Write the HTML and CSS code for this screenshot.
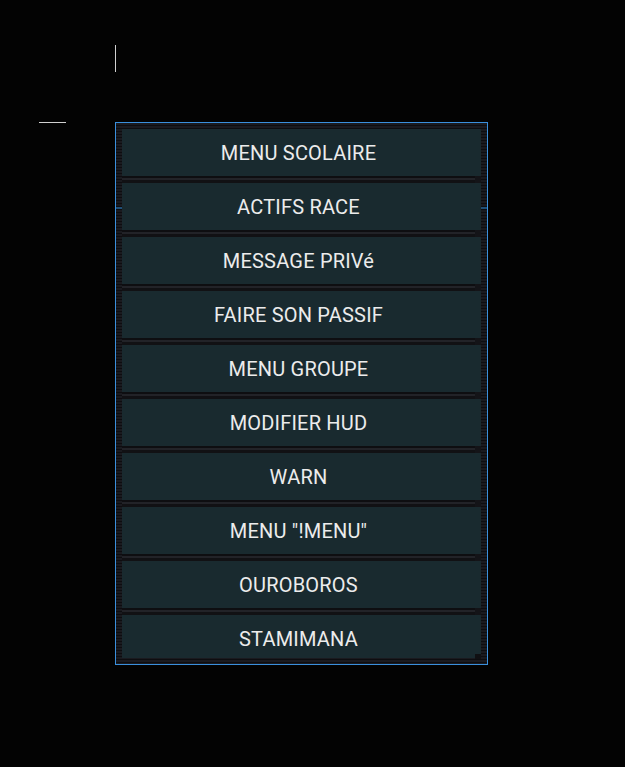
FILE: index.html
```html
<!DOCTYPE html>
<html lang="fr">
<head>
<meta charset="utf-8">
<title>Menu</title>
<link rel="stylesheet" href="styles.css">
</head>
<body>
<div class="stage">
  <div class="caret-v"></div>
  <div class="caret-h"></div>
  <div class="frame">
    <div class="scroll-mark left"></div>
    <div class="scroll-mark right"></div>
    <div class="list">
      <div class="item"><button class="btn">MENU SCOLAIRE</button><div class="band"></div></div>
      <div class="item"><button class="btn">ACTIFS RACE</button><div class="band"></div></div>
      <div class="item"><button class="btn">MESSAGE PRIVé</button><div class="band"></div></div>
      <div class="item"><button class="btn">FAIRE SON PASSIF</button><div class="band"></div></div>
      <div class="item"><button class="btn">MENU GROUPE</button><div class="band"></div></div>
      <div class="item"><button class="btn">MODIFIER HUD</button><div class="band"></div></div>
      <div class="item"><button class="btn">WARN</button><div class="band"></div></div>
      <div class="item"><button class="btn">MENU "!MENU"</button><div class="band"></div></div>
      <div class="item"><button class="btn">OUROBOROS</button><div class="band"></div></div>
      <div class="item"><button class="btn">STAMIMANA</button><div class="band"></div></div>
    </div>
    <div class="corner"></div>
  </div>
</div>
</body>
</html>
```

FILE: styles.css
```css
html, body {
  margin: 0;
  padding: 0;
  background: #030303;
  width: 625px;
  height: 767px;
  overflow: hidden;
  font-family: Roboto, "Liberation Sans", sans-serif;
}

.stage {
  position: relative;
  width: 625px;
  height: 767px;
  padding: 122px 0 0 115px;
  box-sizing: border-box;
}

.caret-v {
  position: absolute;
  left: 115px;
  top: 45px;
  width: 1px;
  height: 27px;
  background: #d0d0d0;
}

.caret-h {
  position: absolute;
  left: 39px;
  top: 122px;
  width: 27px;
  height: 1px;
  background: #d0d0d0;
}

.frame {
  position: relative;
  width: 373px;
  height: 543px;
  box-sizing: border-box;
  border: 1px solid #3a8fdc;
  padding: 6px 6px 5px 6px;
  background: repeating-linear-gradient(to bottom, #1a1a1f 0, #1a1a1f 2px, #0d0d10 2px, #0d0d10 3px);
}

.scroll-mark {
  position: absolute;
  top: 84px;
  width: 6px;
  height: 2px;
  background: #1f4f78;
}
.scroll-mark.left { left: 0; }
.scroll-mark.right { right: 0; }

.list {
  height: 529px;
  overflow: hidden;
  display: flex;
  flex-direction: column;
  background: #141418;
}

.item {
  display: flex;
  flex-direction: column;
  flex: none;
}

.btn {
  display: flex;
  align-items: center;
  justify-content: center;
  height: 47px;
  width: 100%;
  margin: 0;
  border: 0;
  padding: 0 6px 0 0;
  background: #192a2f;
  color: #ececec;
  font-family: Roboto, "Liberation Sans", sans-serif;
  font-size: 20px;
  letter-spacing: 0.2px;
}

.band {
  height: 7px;
  width: 353px;
  background: linear-gradient(to bottom, #0e0e11 0, #0e0e11 2px, #222328 2px, #222328 4px, #111114 4px, #111114 7px);
}

.corner {
  position: absolute;
  right: 6px;
  bottom: 5px;
  width: 6px;
  height: 5px;
  background: #101013;
}
```
